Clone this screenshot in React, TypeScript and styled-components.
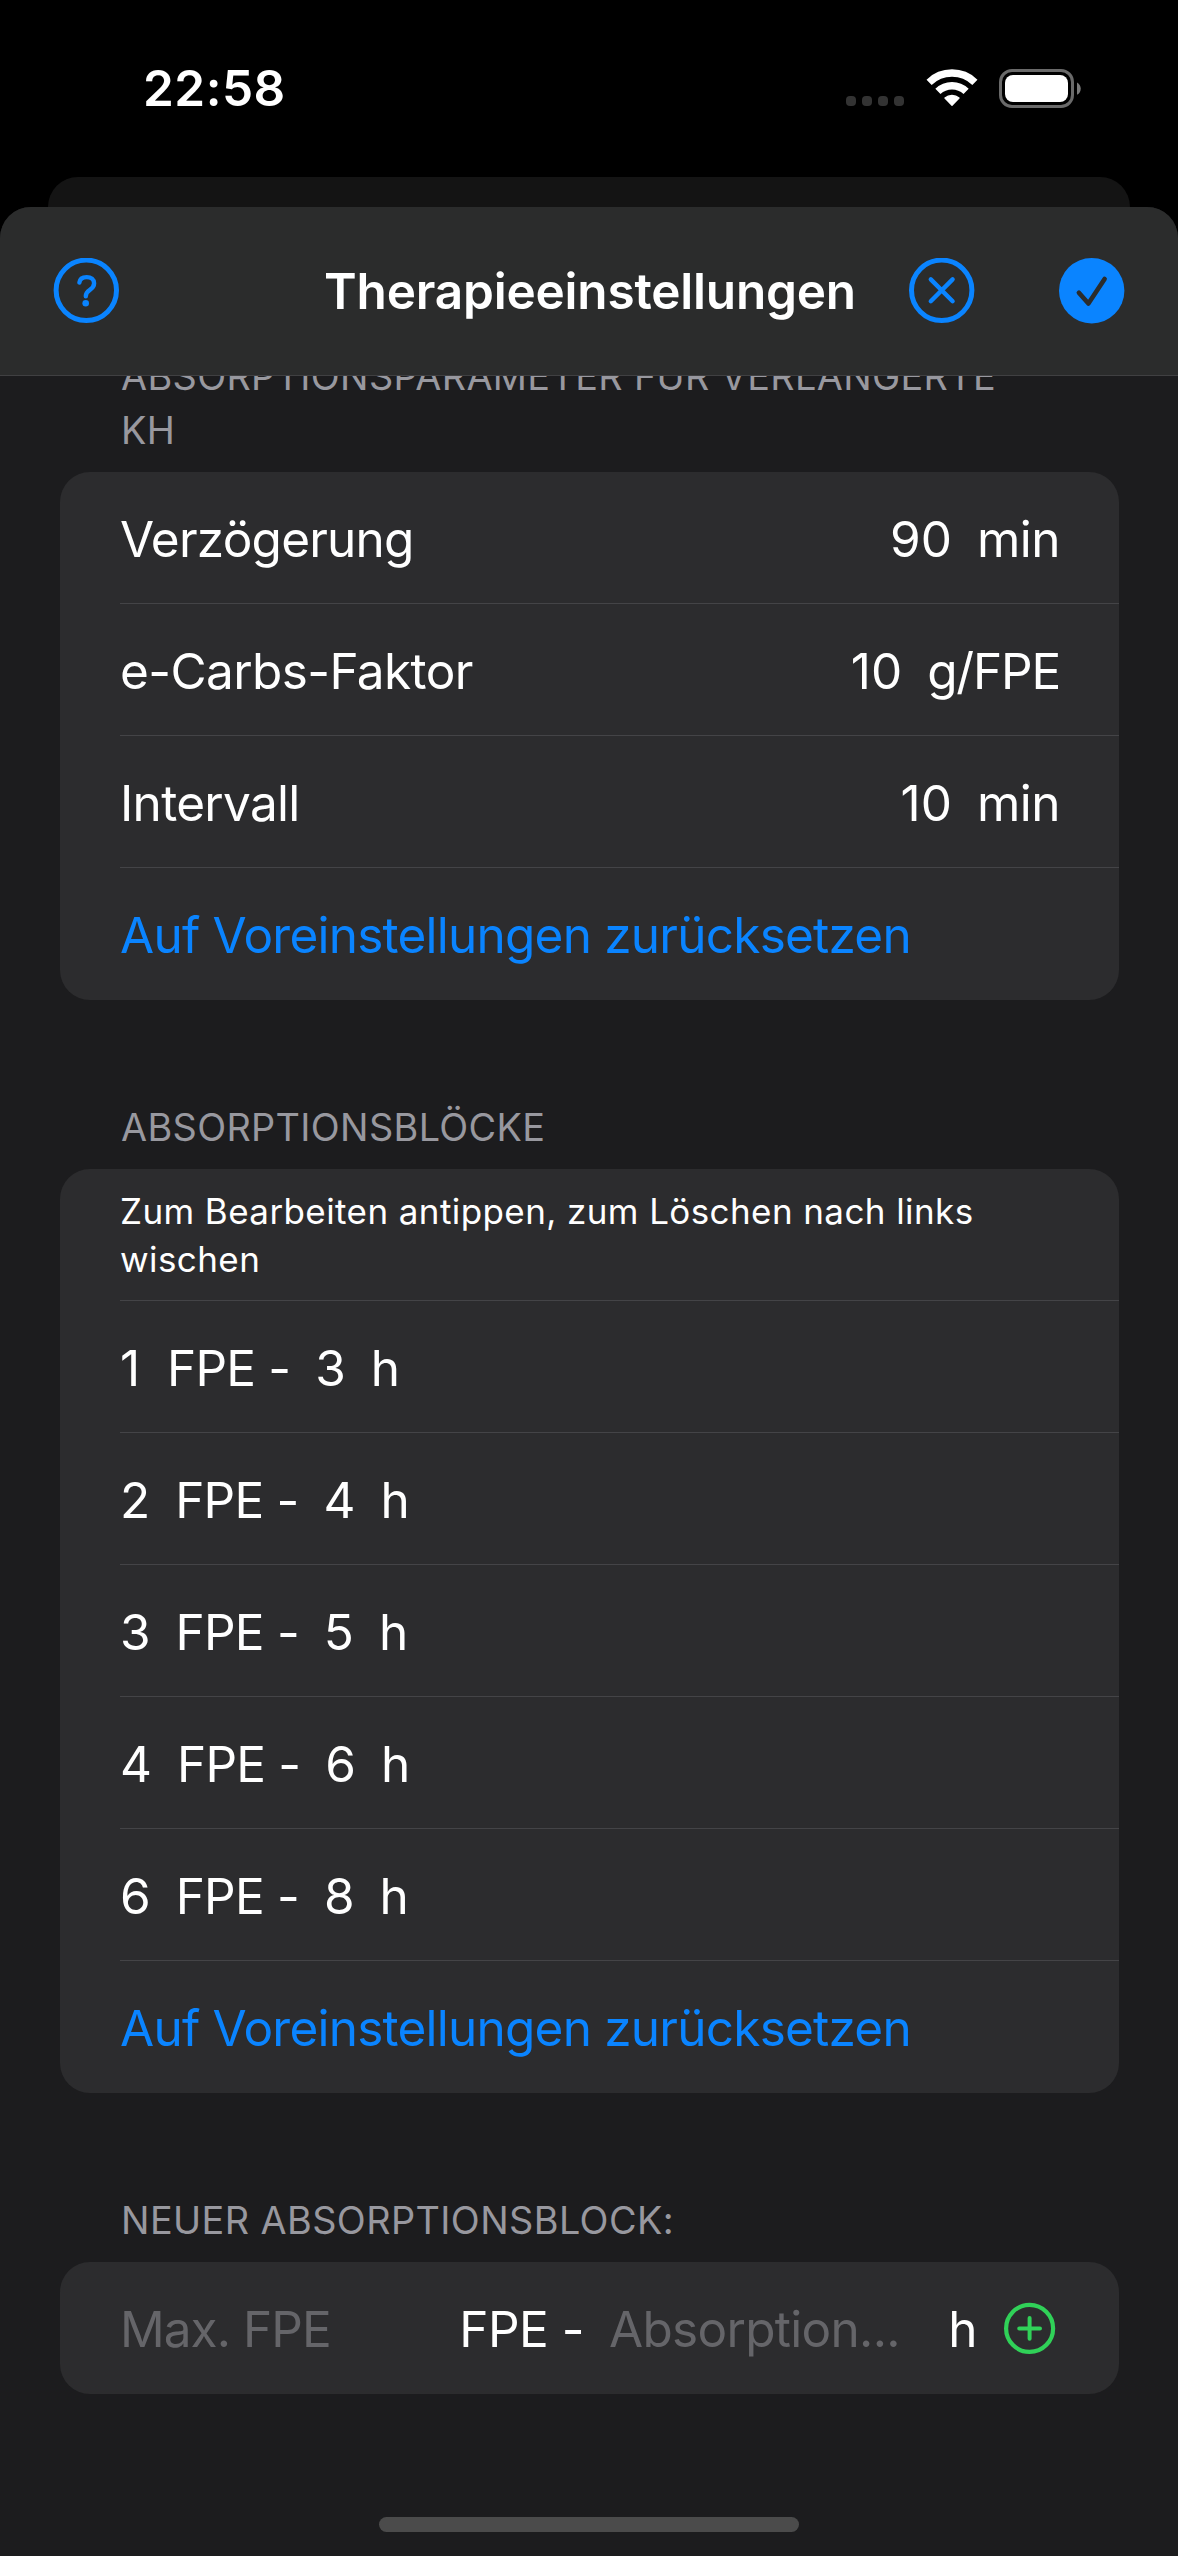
import React from 'react';
import styled, { createGlobalStyle } from 'styled-components';

const colors = {
  sheet: '#1c1c1e',
  card: '#2c2c2e',
  nav: '#2b2c2c',
  line: '#444447',
  label: '#98989f',
  placeholder: '#656569',
  blue: '#0a84ff',
  green: '#30d158',
};

const GlobalStyle = createGlobalStyle`
  *, *::before, *::after { box-sizing: border-box; }
  html, body { margin: 0; background: #000; }
  body {
    font-family: Inter, "Liberation Sans", sans-serif;
    color: #fff;
  }
`;

const Screen = styled.div`
  display: flex;
  flex-direction: column;
  width: 1178px;
  height: 2556px;
  overflow: hidden;
  background: #000;
`;

const StatusBar = styled.header`
  display: flex;
  justify-content: space-between;
  align-items: flex-start;
  height: 177px;
  padding: 58px 97px 0 143px;
`;

const Clock = styled.time`
  font-size: 49.5px;
  font-weight: 600;
  line-height: 60px;
  letter-spacing: 0.5px;
`;

const StatusIcons = styled.div`
  display: flex;
  align-items: center;
  height: 60px;
`;

const SignalDots = styled.div`
  display: flex;
  gap: 6px;
  margin: 26px 22px 0 0;
`;

const SignalDot = styled.span`
  width: 10px;
  height: 10px;
  border-radius: 4px;
  background: #333;
`;

const WifiIcon = styled.svg`
  display: block;
  width: 52px;
  height: 40px;
  margin-right: 21px;
`;

const BatteryIcon = styled.svg`
  display: block;
  width: 82px;
  height: 39px;
`;

const BackSheet = styled.div`
  height: 60px;
  margin: 0 48px -30px;
  flex: none;
  border-radius: 30px 30px 0 0;
  background: #141414;
`;

const Sheet = styled.main`
  position: relative;
  display: flex;
  flex: 1;
  flex-direction: column;
  min-height: 0;
  overflow: hidden;
  border-radius: 31px 31px 0 0;
  background: ${colors.sheet};
`;

const NavBar = styled.nav`
  display: grid;
  grid-template-columns: 1fr auto 1fr;
  align-items: center;
  height: 169px;
  flex: none;
  padding: 0 53px;
  border-bottom: 1px solid #404042;
  background: ${colors.nav};
`;

const Title = styled.h1`
  margin: 0;
  padding-left: 2px;
  font-size: 49.5px;
  font-weight: 600;
  line-height: 60px;
  letter-spacing: -0.2px;
`;

const NavActions = styled.div<{ $end?: boolean }>`
  display: flex;
  justify-content: ${(p) => (p.$end ? 'flex-end' : 'flex-start')};
  gap: 84px;
`;

const IconButton = styled.button`
  display: block;
  padding: 0;
  border: 0;
  background: none;
  color: ${colors.blue};
`;

const NavIcon = styled.svg`
  display: block;
  width: 66px;
  height: 66px;
  fill: none;
  stroke: currentColor;
  stroke-width: 5;
  stroke-linecap: round;
  stroke-linejoin: round;
`;

const Scroller = styled.div`
  flex: 1;
  min-height: 0;
  overflow: hidden;
`;

const Form = styled.div`
  display: flex;
  flex-direction: column;
  gap: 100px;
  margin-top: -27px;
  padding: 0 59px 0 60px;
`;

const SectionTitle = styled.h2<{ $tracking?: number }>`
  max-width: 980px;
  margin: 0 0 15px;
  padding-left: 61px;
  color: ${colors.label};
  font-size: 37.8px;
  font-weight: 400;
  line-height: 54px;
  letter-spacing: ${(p) => p.$tracking ?? 0.36}px;
`;

const Card = styled.div`
  overflow: hidden;
  border-radius: 30px;
  background: ${colors.card};
`;

const Row = styled.div<{ $color?: string }>`
  display: flex;
  align-items: center;
  gap: 25px;
  height: 132px;
  margin-left: 60px;
  padding: 2px 59px 0 0;
  color: ${(p) => p.$color ?? '#fff'};
  font-size: 49.5px;
  line-height: 60px;
  letter-spacing: -0.77px;
  white-space: nowrap;

  & + & {
    box-shadow: 0 -1px 0 ${colors.line};
  }
`;

const RowLabel = styled.span<{ $tracking?: number }>`
  flex: 1;
  letter-spacing: ${(p) => p.$tracking ?? -0.77}px;
`;

const Amount = styled.span`
  min-width: 22px;
  letter-spacing: 0;
`;

const Unit = styled.span<{ $tracking?: number }>`
  letter-spacing: ${(p) => p.$tracking ?? -0.5}px;
`;

const Hint = styled.p`
  margin: 0;
  padding-bottom: 2px;
  font-size: 35px;
  line-height: 48px;
  letter-spacing: 0.41px;
  white-space: normal;
`;

const Field = styled.span<{ $tracking: number }>`
  flex: 1 1 0;
  min-width: 0;
  color: ${colors.placeholder};
  letter-spacing: ${(p) => p.$tracking}px;
`;

const AddButton = styled(IconButton)`
  color: ${colors.green};
`;

const AddIcon = styled(NavIcon)`
  width: 58px;
  height: 58px;
  stroke-width: 4.2;
`;

const HomeIndicator = styled.div`
  width: 420px;
  height: 15px;
  flex: none;
  margin: 0 auto 24px;
  border-radius: 7.5px;
  background: #4b4b4b;
`;

const parameters = [
  { label: 'Verzögerung', amount: '90', unit: 'min', tracking: -0.77, unitTracking: -0.5 },
  { label: 'e-Carbs-Faktor', amount: '10', unit: 'g/FPE', tracking: -0.6, unitTracking: -1.2 },
  { label: 'Intervall', amount: '10', unit: 'min', tracking: -0.7, unitTracking: -0.5 },
];

const blocks = [
  { fpe: 1, hours: 3 },
  { fpe: 2, hours: 4 },
  { fpe: 3, hours: 5 },
  { fpe: 4, hours: 6 },
  { fpe: 6, hours: 8 },
];

export default function App() {
  return (
    <Screen>
      <GlobalStyle />
      <StatusBar>
        <Clock>22:58</Clock>
        <StatusIcons>
          <SignalDots>
            <SignalDot />
            <SignalDot />
            <SignalDot />
            <SignalDot />
          </SignalDots>
          <WifiIcon viewBox="-26 -38 52 40">
            <path d="M-22.9 -23.7A33 33 0 0 1 22.9 -23.7" fill="none" stroke="#fff" strokeWidth="7.4" />
            <path d="M-14.1 -14.6A20.3 20.3 0 0 1 14.1 -14.6" fill="none" stroke="#fff" strokeWidth="7.4" />
            <path d="M0 -0.8L-7 -7.9A10.5 10.5 0 0 1 7 -7.9Z" fill="#fff" stroke="#fff" strokeWidth="1.4" strokeLinejoin="round" />
          </WifiIcon>
          <BatteryIcon viewBox="0 0 82 39">
            <rect x="1.5" y="1.5" width="72" height="36" rx="11.5" fill="none" stroke="#6a6a6a" strokeWidth="3" />
            <rect x="6" y="6" width="63" height="27" rx="8" fill="#fff" />
            <path d="M78 13.5C83 16 83 23.5 78 25.8Z" fill="#7a7a7a" />
          </BatteryIcon>
        </StatusIcons>
      </StatusBar>
      <BackSheet />
      <Sheet>
        <NavBar>
          <NavActions>
            <IconButton aria-label="Hilfe">
              <NavIcon viewBox="0 0 66 66">
                <circle cx="33.3" cy="32.3" r="30.2" />
                <path d="M26.4 24.6C26.8 21.1 29.6 19.1 33.7 19.1C38 19.1 41.1 21.5 41.1 25.3C41.1 28.4 39.6 30.1 36.9 31.8C33.8 33.7 32.8 35.1 32.8 38.3" strokeWidth="4.4" />
                <circle cx="32.7" cy="45.3" r="3.3" fill="currentColor" stroke="none" />
              </NavIcon>
            </IconButton>
          </NavActions>
          <Title>Therapieeinstellungen</Title>
          <NavActions $end>
            <IconButton aria-label="Abbrechen">
              <NavIcon viewBox="0 0 66 66">
                <circle cx="32.7" cy="32.3" r="30.2" />
                <path d="M21.8 21.4L43.6 43.2M43.6 21.4L21.8 43.2" strokeWidth="4.4" />
              </NavIcon>
            </IconButton>
            <IconButton aria-label="Sichern">
              <NavIcon viewBox="0 0 66 66">
                <circle cx="32.7" cy="32.7" r="32.7" fill="currentColor" stroke="none" />
                <path d="M19.9 34.7L29.4 45.6L45.6 20.9" stroke={colors.nav} strokeWidth="4.6" />
              </NavIcon>
            </IconButton>
          </NavActions>
        </NavBar>
        <Scroller>
          <Form>
            <section>
              <SectionTitle>ABSORPTIONSPARAMETER FÜR VERLÄNGERTE KH</SectionTitle>
              <Card>
                {parameters.map((p) => (
                  <Row key={p.label}>
                    <RowLabel $tracking={p.tracking}>{p.label}</RowLabel>
                    <Amount>{p.amount}</Amount>
                    <Unit $tracking={p.unitTracking}>{p.unit}</Unit>
                  </Row>
                ))}
                <Row $color={colors.blue}>Auf Voreinstellungen zurücksetzen</Row>
              </Card>
            </section>
            <section>
              <SectionTitle>ABSORPTIONSBLÖCKE</SectionTitle>
              <Card>
                <Row>
                  <Hint>Zum Bearbeiten antippen, zum Löschen nach links wischen</Hint>
                </Row>
                {blocks.map((b) => (
                  <Row key={b.fpe}>
                    <Amount>{b.fpe}</Amount>
                    <Unit $tracking={-0.8}>FPE -</Unit>
                    <Amount>{b.hours}</Amount>
                    <Unit>h</Unit>
                  </Row>
                ))}
                <Row $color={colors.blue}>Auf Voreinstellungen zurücksetzen</Row>
              </Card>
            </section>
            <section>
              <SectionTitle $tracking={0.42}>NEUER ABSORPTIONSBLOCK:</SectionTitle>
              <Card>
                <Row>
                  <Field $tracking={-0.95}>Max. FPE</Field>
                  <Unit>FPE -</Unit>
                  <Field $tracking={-0.7}>Absorption...</Field>
                  <Unit>h</Unit>
                  <AddButton aria-label="Hinzufügen">
                    <AddIcon viewBox="0 0 58 58">
                      <circle cx="27.6" cy="28.4" r="23.5" />
                      <path d="M27.6 18V38.8M17.2 28.4H38" strokeWidth="4" />
                    </AddIcon>
                  </AddButton>
                </Row>
              </Card>
            </section>
          </Form>
        </Scroller>
        <HomeIndicator />
      </Sheet>
    </Screen>
  );
}
